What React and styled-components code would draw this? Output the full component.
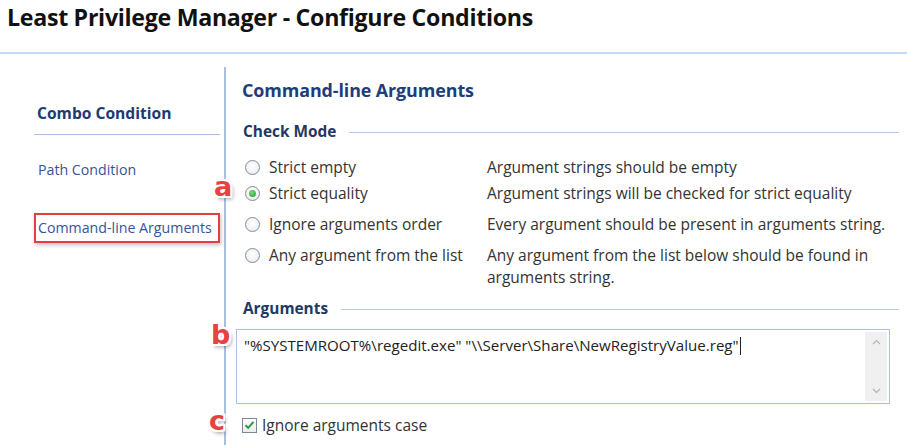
import React from "react";
import styled, { createGlobalStyle } from "styled-components";

const GlobalStyle = createGlobalStyle`
  html, body {
    margin: 0;
    padding: 0;
    background: #ffffff;
  }
  body {
    font-family: "Open Sans", "Noto Sans", "DejaVu Sans", sans-serif;
    color: #333333;
  }
`;

const Page = styled.div`
  position: relative;
  width: 907px;
  height: 445px;
  overflow: hidden;
  background: #fff;
`;

const Header = styled.header`
  height: 54px;
  padding: 0 7px;
  border-bottom: 2px solid #c4daf2;
  box-sizing: border-box;
`;

const Title = styled.h1`
  margin: 0;
  padding-top: 2px;
  font-size: 23.2px;
  line-height: 30px;
  font-weight: 700;
  color: #111;
  letter-spacing: -0.3px;
`;

const Body = styled.div`
  display: grid;
  grid-template-columns: 226px 1fr;
  padding-top: 13px;
`;

const Sidebar = styled.nav`
  border-right: 2px solid #a9bfe0;
  height: 380px;
  padding: 35px 4px 0 34px;
`;

const NavItem = styled.div`
  font-size: 14.2px;
  line-height: 20px;
  color: #34549a;
  padding: 0 4px;
  margin-top: ${(p) => p.$mt || 0}px;
  width: fit-content;
`;

const NavHead = styled.div`
  font-size: 15.6px;
  line-height: 22px;
  font-weight: 700;
  color: #1c3a72;
  padding: 0 3px 10px;
  border-bottom: 1px solid #a9c1e2;
`;

const MarkedItem = styled(NavItem)`
  border: 2px solid #e04040;
  padding: 3px 4px 3px 2px;
  width: 176px;
  box-shadow: 1px 2px 4px rgba(0, 0, 0, 0.25);
`;

const Main = styled.main`
  padding: 11px 15px 0 16px;
`;

const PanelTitle = styled.h2`
  margin: 0 0 20px;
  font-size: 17.9px;
  line-height: 24px;
  font-weight: 700;
  color: #1f3d7a;
  letter-spacing: -0.1px;
`;

const GroupHead = styled.div`
  display: flex;
  align-items: center;
  gap: 13px;
  margin-top: ${(p) => p.$mt || 0}px;
  font-size: 15.4px;
  line-height: 20px;
  font-weight: 700;
  color: #1f3864;
  padding-left: 1px;
  &::after {
    content: "";
    flex: 1;
    height: 1px;
    background: #b3c8e6;
  }
`;

const Options = styled.div`
  margin-top: 14px;
  padding-left: 3px;
`;

const OptionRow = styled.div`
  display: grid;
  grid-template-columns: 14px 208px 412px;
  column-gap: 10px;
  align-items: start;
  height: ${(p) => p.$h}px;
  font-size: 15.5px;
  line-height: 22px;
  color: #333;
`;

const Radio = styled.span`
  width: 13px;
  height: 13px;
  margin-top: 4px;
  border-radius: 50%;
  border: 1px solid #838d98;
  background: radial-gradient(circle at 50% 40%, #ffffff 0%, #f1f2f4 60%, #dfe2e6 100%);
  display: flex;
  align-items: center;
  justify-content: center;
  &::after {
    content: "";
    width: 7px;
    height: 7px;
    border-radius: 50%;
    background: ${(p) => (p.$checked ? "radial-gradient(circle at 40% 35%, #6fe07a, #1e9a2c)" : "transparent")};
  }
`;

const TextBox = styled.div`
  display: flex;
  margin: 10px 0 0 -6px;
  width: 654px;
  height: 75px;
  box-sizing: border-box;
  border: 1px solid #a9c1e2;
  background: #fff;
`;

const TextContent = styled.div`
  flex: 1;
  padding: 4px 7px;
  font-size: 15.1px;
  line-height: 22px;
  color: #222;
  white-space: nowrap;
`;

const Caret = styled.span`
  display: inline-block;
  width: 1px;
  height: 18px;
  background: #222;
  vertical-align: -4px;
  margin-left: 1px;
`;

const ScrollBar = styled.div`
  width: 22px;
  margin: 2px 2px 2px 0;
  background: #f0f0f0;
  display: flex;
  flex-direction: column;
  justify-content: space-between;
  align-items: center;
  padding: 7px 0;
  box-sizing: border-box;
`;

const CheckRow = styled.label`
  display: flex;
  align-items: center;
  gap: 5px;
  margin-top: 11px;
  font-size: 15.5px;
  line-height: 20px;
  color: #333;
`;

const CheckBox = styled.span`
  width: 13px;
  height: 13px;
  border: 1px solid #7d8894;
  background: linear-gradient(#fdfdfd, #e9ecef);
  display: flex;
  align-items: center;
  justify-content: center;
`;

const Marker = styled.span`
  position: absolute;
  left: ${(p) => p.$x}px;
  top: ${(p) => p.$y}px;
  font-family: "DejaVu Sans", "Noto Sans", sans-serif;
  font-weight: 700;
  font-size: 27px;
  line-height: 1;
  color: #e8413f;
  text-shadow:
    -2px 0 0 #fff, 2px 0 0 #fff, 0 -2px 0 #fff, 0 2px 0 #fff,
    -2px -2px 0 #fff, 2px 2px 0 #fff, -2px 2px 0 #fff, 2px -2px 0 #fff,
    2px 3px 4px rgba(0, 0, 0, 0.45);
`;

const Chevron = ({ up }) => (
  <svg width="9" height="6" viewBox="0 0 9 6">
    <path
      d={up ? "M1 5 L4.5 1.5 L8 5" : "M1 1 L4.5 4.5 L8 1"}
      fill="none"
      stroke="#b5b5b5"
      strokeWidth="1.2"
    />
  </svg>
);

const options = [
  { label: "Strict empty", desc: "Argument strings should be empty", h: 26 },
  { label: "Strict equality", desc: "Argument strings will be checked for strict equality", h: 31, checked: true },
  { label: "Ignore arguments order", desc: "Every argument should be present in arguments string.", h: 31 },
  { label: "Any argument from the list", desc: "Any argument from the list below should be found in arguments string.", h: 44 },
];

export default function App() {
  return (
    <Page>
      <GlobalStyle />
      <Header>
        <Title>Least Privilege Manager - Configure Conditions</Title>
      </Header>
      <Body>
        <Sidebar>
          <NavHead>Combo Condition</NavHead>
          <NavItem $mt={25}>Path Condition</NavItem>
          <MarkedItem $mt={33}>Command-line Arguments</MarkedItem>
        </Sidebar>
        <Main>
          <PanelTitle>Command-line Arguments</PanelTitle>
          <GroupHead>Check Mode</GroupHead>
          <Options>
            {options.map((o) => (
              <OptionRow key={o.label} $h={o.h}>
                <Radio $checked={o.checked} />
                <span>{o.label}</span>
                <span>{o.desc}</span>
              </OptionRow>
            ))}
          </Options>
          <GroupHead $mt={11}>Arguments</GroupHead>
          <TextBox>
            <TextContent>
              "%SYSTEMROOT%\regedit.exe" "\\Server\Share\NewRegistryValue.reg"
              <Caret />
            </TextContent>
            <ScrollBar>
              <Chevron up />
              <Chevron />
            </ScrollBar>
          </TextBox>
          <CheckRow>
            <CheckBox>
              <svg width="11" height="10" viewBox="0 0 11 10">
                <path d="M1.5 5.2 L4.2 7.8 L9.5 1.8" fill="none" stroke="#2f9a3c" strokeWidth="2" />
              </svg>
            </CheckBox>
            Ignore arguments case
          </CheckRow>
        </Main>
      </Body>
      <Marker $x={214} $y={173}>a</Marker>
      <Marker $x={211} $y={321}>b</Marker>
      <Marker $x={209} $y={407}>c</Marker>
    </Page>
  );
}
